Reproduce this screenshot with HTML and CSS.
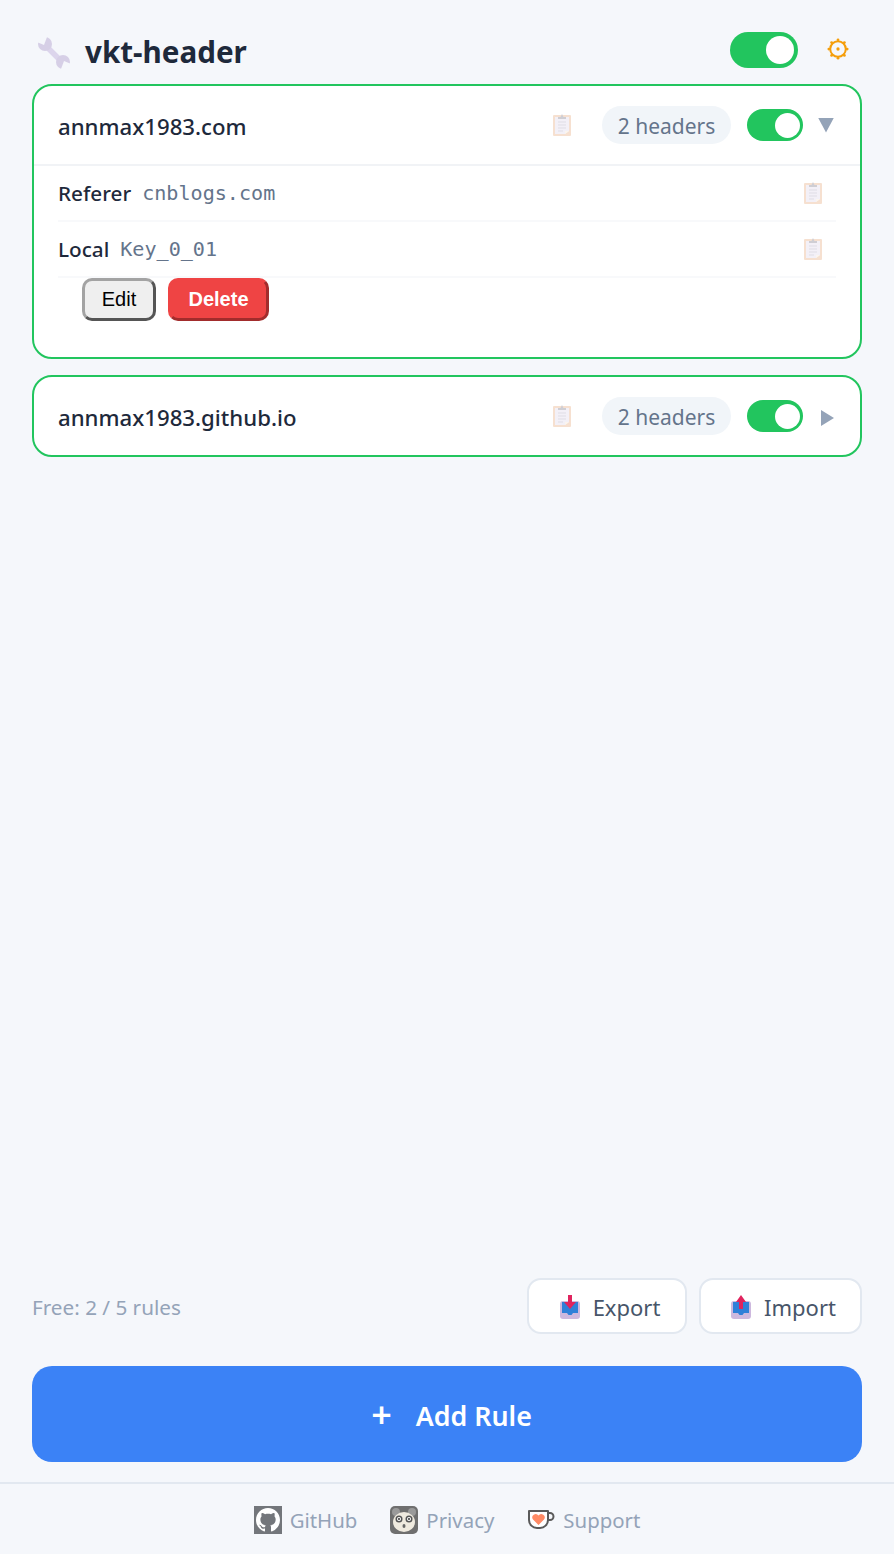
FILE: index.html
```html
<!DOCTYPE html>
<html lang="en">
<head>
  <meta charset="UTF-8" />
  <title>vkt-header</title>
  <link rel="stylesheet" href="styles.css">
</head>
<body>
  <svg class="defs" width="0" height="0">
    <symbol id="clip" viewBox="0 0 18 22">
      <rect x="0" y="1" width="18" height="21" rx="1" fill="#f6e0d0"/>
      <path d="M2 3h14v14l-4 3H2z" fill="#f3f0f7"/>
      <path d="M16 17l-4 3v-3z" fill="#fbf5ee"/>
      <path d="M5 5V3h2.500L9 0l1.500 3H13v2z" fill="#cfced4"/>
      <path d="M5 8h8M5 11h8M5 14h8M5 17h5" stroke="#dfdde5" stroke-width="1"/>
    </symbol>
  </svg>

  <div class="app">
    <header class="top">
      <div class="brand">
        <svg class="wrench" viewBox="0 0 32 32">
          <path d="M8 9L25 26" stroke="#dcd5ec" stroke-width="5.500"/>
          <circle cx="7" cy="7" r="7" fill="#d6cfe6"/>
          <circle cx="25" cy="25" r="7" fill="#d6cfe6"/>
          <path d="M-1 5L6 8L9 0L0 -1z" fill="#f5f7fb"/>
          <path d="M33 27L26 24L23 32L32 33z" fill="#f5f7fb"/>
        </svg>
        <h1>vkt-header</h1>
      </div>
      <div class="top-right">
        <span class="toggle big"><i></i></span>
        <svg class="gear" viewBox="0 0 24 24">
          <circle cx="12" cy="12" r="8.500" fill="none" stroke="#f59e0b" stroke-width="2.200"/>
          <circle cx="12" cy="12" r="1.800" fill="#f59e0b"/>
          <g fill="#f59e0b">
            <circle cx="12" cy="2" r="1.500"/><circle cx="12" cy="22" r="1.500"/>
            <circle cx="2" cy="12" r="1.500"/><circle cx="22" cy="12" r="1.500"/>
            <circle cx="5" cy="5" r="1.500"/><circle cx="19" cy="5" r="1.500"/>
            <circle cx="5" cy="19" r="1.500"/><circle cx="19" cy="19" r="1.500"/>
          </g>
        </svg>
      </div>
    </header>

    <main class="rules">
      <section class="card">
        <div class="card-head open">
          <span class="domain">annmax1983.com</span>
          <svg class="copy"><use href="#clip"/></svg>
          <span class="pill">2 headers</span>
          <span class="toggle"><i></i></span>
          <span class="arrow down"></span>
        </div>
        <div class="card-body">
          <div class="row">
            <span class="name">Referer</span>
            <span class="value">cnblogs.com</span>
            <svg class="copy"><use href="#clip"/></svg>
          </div>
          <div class="row">
            <span class="name">Local</span>
            <span class="value">Key_0_01</span>
            <svg class="copy"><use href="#clip"/></svg>
          </div>
          <div class="actions">
            <button class="btn-edit">Edit</button>
            <button class="btn-delete">Delete</button>
          </div>
        </div>
      </section>

      <section class="card">
        <div class="card-head">
          <span class="domain">annmax1983.github.io</span>
          <svg class="copy"><use href="#clip"/></svg>
          <span class="pill">2 headers</span>
          <span class="toggle"><i></i></span>
          <span class="arrow right"></span>
        </div>
      </section>
    </main>

    <div class="tools">
      <span class="quota">Free: 2 / 5 rules</span>
      <div class="tool-btns">
        <button class="tool export">
          <svg viewBox="0 0 20 24">
            <rect x="0" y="6" width="20" height="18" rx="3" fill="#cdb8de"/>
            <path d="M2 7h16v11h-5l-1.500 2h-3L7 18H2z" fill="#2f80d8"/>
            <path d="M8 0h4v7h4l-6 7-6-7h4z" fill="#e0245e"/>
          </svg>
          Export
        </button>
        <button class="tool import">
          <svg viewBox="0 0 20 24">
            <rect x="0" y="6" width="20" height="18" rx="3" fill="#cdb8de"/>
            <path d="M2 7h16v11h-5l-1.500 2h-3L7 18H2z" fill="#2f80d8"/>
            <path d="M8 14h4V7h3L10 0 5 7h3z" fill="#e0245e"/>
          </svg>
          Import
        </button>
      </div>
    </div>

    <button class="add-rule"><span class="plus">+</span>Add Rule</button>
  </div>

  <footer class="foot">
    <a class="foot-link">
      <svg viewBox="0 0 28 28">
        <rect width="28" height="28" fill="#73767b"/>
        <g transform="translate(2 2) scale(1.500)">
          <path fill="#fff" d="M8 0C3.580 0 0 3.580 0 8c0 3.540 2.290 6.530 5.470 7.590.4.070.55-.17.55-.38 0-.19-.01-.82-.01-1.490-2.010.37-2.530-.49-2.690-.94-.09-.23-.48-.94-.82-1.130-.28-.15-.68-.52-.01-.53.63-.01 1.080.58 1.230.82.72 1.210 1.870.87 2.330.66.070-.52.28-.87.51-1.070-1.780-.2-3.640-.89-3.640-3.950 0-.87.31-1.590.82-2.150-.08-.2-.36-1.020.08-2.120 0 0 .67-.21 2.200.82.64-.18 1.320-.27 2-.27.68 0 1.360.09 2 .27 1.530-1.040 2.200-.82 2.200-.82.44 1.100.16 1.920.08 2.120.51.56.82 1.270.82 2.150 0 3.070-1.870 3.750-3.650 3.950.29.25.54.73.54 1.480 0 1.070-.01 1.930-.01 2.200 0 .21.15.46.55.38A8.013 8.013 0 0 0 16 8c0-4.420-3.580-8-8-8z"/>
        </g>
      </svg>
      GitHub
    </a>
    <a class="foot-link">
      <svg viewBox="0 0 28 28">
        <rect width="28" height="28" rx="5" fill="#6f6f6f"/>
        <circle cx="6" cy="6" r="4" fill="#9a9a9a"/>
        <circle cx="22" cy="6" r="4" fill="#9a9a9a"/>
        <ellipse cx="14" cy="16" rx="11" ry="10" fill="#efeadf"/>
        <circle cx="9" cy="13" r="3.500" fill="#555"/>
        <circle cx="19" cy="13" r="3.500" fill="#555"/>
        <circle cx="9" cy="13" r="2" fill="#fff"/>
        <circle cx="19" cy="13" r="2" fill="#fff"/>
        <circle cx="9" cy="13" r="1" fill="#333"/>
        <circle cx="19" cy="13" r="1" fill="#333"/>
        <ellipse cx="14" cy="20" rx="1.500" ry="2" fill="#666"/>
      </svg>
      Privacy
    </a>
    <a class="foot-link">
      <svg viewBox="0 0 28 28">
        <path d="M2 5h19v9a8 8 0 0 1-8 8h-3a8 8 0 0 1-8-8z" fill="#fff" stroke="#5a5a5a" stroke-width="2" stroke-linejoin="round"/>
        <path d="M21 7h2a3.500 3.500 0 0 1 0 7h-2" fill="none" stroke="#5a5a5a" stroke-width="2"/>
        <path d="M11.500 19L6 13.500a3.200 3.200 0 0 1 5.500-4 3.200 3.200 0 0 1 5.500 4z" fill="#ff8a65"/>
      </svg>
      Support
    </a>
  </footer>
</body>
</html>
```

FILE: styles.css
```css
* {
  box-sizing: border-box;
}

html,
body {
  height: 100%;
}

body {
  margin: 0;
  display: flex;
  flex-direction: column;
  background: #f5f7fb;
  color: #1e293b;
  font-family: "Noto Sans", "Open Sans", sans-serif;
}

.defs {
  position: absolute;
}

.app {
  flex: 1;
  display: flex;
  flex-direction: column;
  padding: 32px 32px 20px;
}

.top {
  display: flex;
  align-items: center;
  justify-content: space-between;
  height: 36px;
  margin-bottom: 16px;
}

.brand {
  display: flex;
  align-items: center;
  gap: 15px;
  padding-left: 6px;
}

.wrench {
  width: 32px;
  height: 32px;
  margin-top: 6px;
}

h1 {
  margin: 0;
  padding-top: 4px;
  font-size: 29.600px;
  font-weight: 700;
  line-height: 36px;
}

.top-right {
  display: flex;
  align-items: center;
  gap: 29px;
  padding-right: 13px;
}

.gear {
  width: 22px;
  height: 22px;
  margin-bottom: 2px;
}

.toggle {
  position: relative;
  display: block;
  flex: none;
  width: 56px;
  height: 32px;
  border-radius: 16px;
  background: #22c55e;
}

.toggle i {
  position: absolute;
  top: 4px;
  right: 3px;
  width: 25px;
  height: 25px;
  border-radius: 50%;
  background: #fff;
}

.toggle.big {
  width: 68px;
  height: 36px;
  border-radius: 18px;
}

.toggle.big i {
  width: 28px;
  height: 28px;
  right: 4px;
}

.rules {
  flex: 1;
  display: flex;
  flex-direction: column;
  gap: 16px;
}

.card {
  background: #fff;
  border: 2px solid #22c55e;
  border-radius: 20px;
}

.card-head {
  display: flex;
  align-items: center;
  height: 78px;
  padding: 0 26px 0 24px;
}

.card-head.open {
  height: 80px;
  border-bottom: 2px solid #f1f3f6;
}

.domain {
  flex: 1;
  padding-top: 2px;
  font-size: 22.200px;
  font-weight: 500;
}

.copy {
  flex: none;
  width: 18px;
  height: 22px;
}

.pill {
  margin: 0 16px 0 31px;
  width: 129px;
  height: 38px;
  border-radius: 19px;
  background: #f1f5f9;
  color: #64748b;
  font-size: 21px;
  line-height: 40px;
  text-align: center;
  white-space: nowrap;
}

.arrow {
  flex: none;
  margin-left: 15px;
  width: 16px;
  height: 15px;
  background: #94a3b8;
}

.arrow.down {
  clip-path: polygon(0 0, 100% 0, 50% 100%);
}

.arrow.right {
  margin: 4px 0 0 18px;
  width: 13px;
  height: 16px;
  clip-path: polygon(0 0, 100% 50%, 0 100%);
}

.card-body {
  padding: 0 24px 36px;
}

.row {
  display: flex;
  align-items: center;
  gap: 11px;
  height: 56px;
  padding-right: 14px;
  border-bottom: 2px solid #f8f9fb;
}

.name {
  font-size: 20.700px;
  font-weight: 500;
}

.value {
  flex: 1;
  color: #64748b;
  font-family: "DejaVu Sans Mono", monospace;
  font-size: 20.100px;
}

.actions {
  display: flex;
  gap: 12px;
  padding-left: 24px;
}

.actions button {
  height: 43px;
  border-style: solid;
  border-width: 3px;
  border-radius: 10px;
  font-family: "Liberation Sans", Arial, sans-serif;
  font-size: 20px;
}

.btn-edit {
  width: 74px;
  padding: 0;
  background: #efefef;
  color: #000;
  border-color: #a3a3a3 #555 #555 #a3a3a3;
}

.btn-delete {
  width: 101px;
  padding: 0;
  background: #ef4444;
  color: #fff;
  font-weight: 700;
  border-color: #ef4444 #a22c2c #a22c2c #ef4444;
}

.tools {
  display: flex;
  align-items: center;
  justify-content: space-between;
  margin-bottom: 32px;
}

.quota {
  padding-top: 2px;
  color: #94a3b8;
  font-size: 20.700px;
}

.tool-btns {
  display: flex;
  gap: 12px;
}

.tool {
  display: flex;
  align-items: center;
  justify-content: center;
  gap: 13px;
  height: 56px;
  padding: 2px 0 0 6px;
  background: #fff;
  border: 2px solid #e2e8f0;
  border-radius: 14px;
  color: #475569;
  font-family: inherit;
  font-size: 22px;
}

.tool svg {
  width: 20px;
  height: 24px;
}

.export {
  width: 160px;
}

.import {
  width: 163px;
}

.add-rule {
  display: flex;
  align-items: center;
  justify-content: center;
  gap: 24px;
  height: 96px;
  padding: 2px 0 0 9px;
  border: none;
  border-radius: 20px;
  background: #3b82f6;
  color: #fff;
  font-family: inherit;
  font-size: 26.800px;
  font-weight: 600;
}

.plus {
  font-size: 36px;
  font-weight: 600;
  line-height: 1;
}

.foot {
  display: flex;
  align-items: center;
  justify-content: center;
  gap: 33px;
  height: 72px;
  padding-top: 2px;
  border-top: 2px solid #e2e8f0;
}

.foot-link {
  display: flex;
  align-items: center;
  gap: 8px;
  color: #94a3b8;
  font-size: 20.400px;
}

.foot-link svg {
  width: 28px;
  height: 28px;
}
```
